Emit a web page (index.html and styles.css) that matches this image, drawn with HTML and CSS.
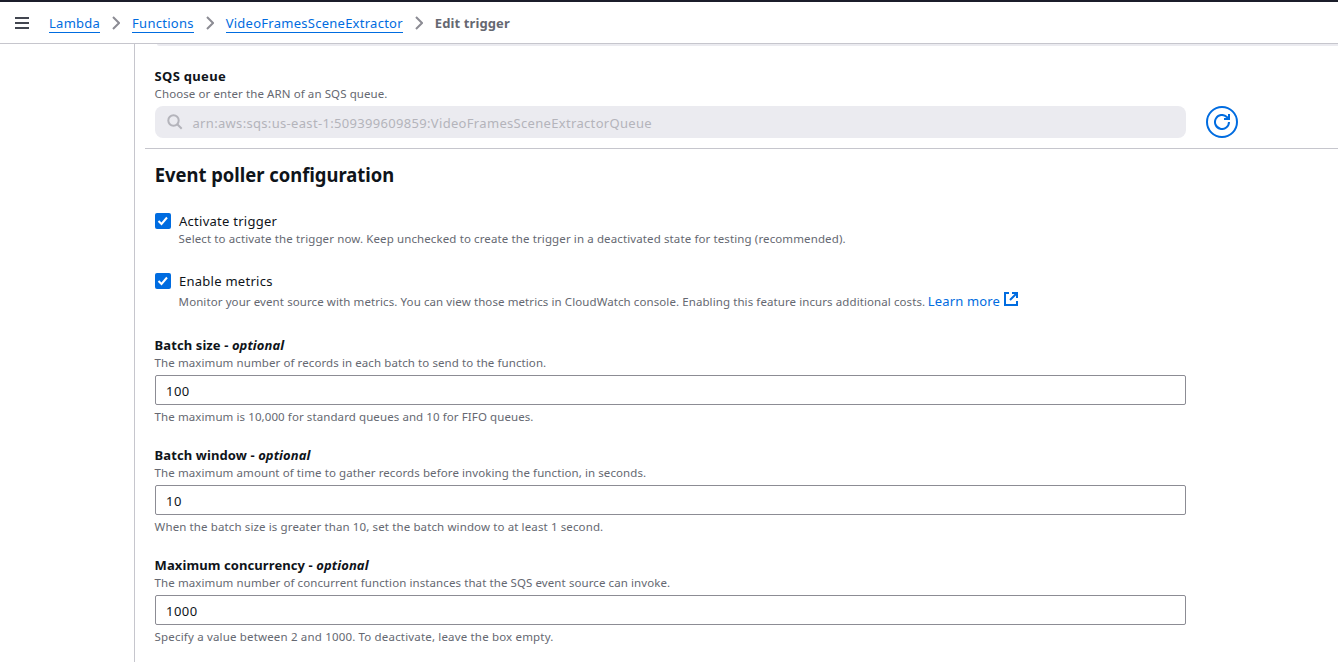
FILE: index.html
```html
<!DOCTYPE html>
<html lang="en">
<head>
<meta charset="utf-8">
<title>Edit trigger - Lambda</title>
<link rel="stylesheet" href="styles.css">
</head>
<body>
<header class="topbar">
  <svg class="menu" width="14" height="12" viewBox="0 0 14 12"><path d="M0 1h14M0 6h14M0 11h14" stroke="#424650" stroke-width="2"/></svg>
  <nav class="crumbs">
    <a href="#">Lambda</a>
    <svg class="chev" width="8" height="14" viewBox="0 0 8 14"><path d="M1 1l6 6-6 6"/></svg>
    <a href="#">Functions</a>
    <svg class="chev" width="8" height="14" viewBox="0 0 8 14"><path d="M1 1l6 6-6 6"/></svg>
    <a href="#">VideoFramesSceneExtractor</a>
    <svg class="chev" width="8" height="14" viewBox="0 0 8 14"><path d="M1 1l6 6-6 6"/></svg>
    <span class="current">Edit trigger</span>
  </nav>
</header>
<div class="page">
  <aside class="side"></aside>
  <main class="content">
    <div class="clipped"></div>
    <section class="queue">
      <div class="label queue-label">SQS queue</div>
      <div class="hint">Choose or enter the ARN of an SQS queue.</div>
      <div class="queue-row">
        <div class="search">
          <svg width="16" height="16" viewBox="0 0 16 16" fill="none" stroke="#b4b4bb" stroke-width="2"><circle cx="6.5" cy="6.5" r="5.2"/><path d="M10.3 10.3l4.4 4.4"/></svg>
          <span>arn:aws:sqs:us-east-1:509399609859:VideoFramesSceneExtractorQueue</span>
        </div>
        <button class="refresh" aria-label="Refresh"><svg width="16" height="16" viewBox="0 0 16 16" fill="none" stroke="#006ce0" stroke-width="2"><path d="M15 8a7 7 0 1 1-2.200-5.100L15 5"/><path d="M15 0v5h-5"/></svg></button>
      </div>
    </section>
    <section class="config">
      <h2><span>Event poller configuration</span></h2>
      <div class="check first">
        <svg class="box" width="16" height="16" viewBox="0 0 16 16"><rect width="16" height="16" rx="2" fill="#006ce0"/><path d="M3.500 8l3 3 5.500-6.500" fill="none" stroke="#fff" stroke-width="2"/></svg>
        <div><div class="check-label">Activate trigger</div><div class="hint activate">Select to activate the trigger now. Keep unchecked to create the trigger in a deactivated state for testing (recommended).</div></div>
      </div>
      <div class="check second">
        <svg class="box" width="16" height="16" viewBox="0 0 16 16"><rect width="16" height="16" rx="2" fill="#006ce0"/><path d="M3.500 8l3 3 5.500-6.500" fill="none" stroke="#fff" stroke-width="2"/></svg>
        <div><div class="check-label">Enable metrics</div><div class="hint metrics"><span>Monitor your event source with metrics. You can view those metrics in CloudWatch console. Enabling this feature incurs additional costs.</span><a href="#">Learn more</a><svg width="14" height="14" viewBox="0 0 14 14" fill="none" stroke="#006ce0" stroke-width="2"><path d="M5 1H1v12h12V9"/><path d="M8 1h5v5M13 1L6 8"/></svg></div></div>
      </div>
      <div class="field">
        <div class="label">Batch size - <i>optional</i></div>
        <div class="hint">The maximum number of records in each batch to send to the function.</div>
        <input value="100" aria-label="Batch size">
        <div class="hint note">The maximum is 10,000 for standard queues and 10 for FIFO queues.</div>
      </div>
      <div class="field">
        <div class="label">Batch window - <i>optional</i></div>
        <div class="hint">The maximum amount of time to gather records before invoking the function, in seconds.</div>
        <input value="10" aria-label="Batch window">
        <div class="hint note window-note">When the batch size is greater than 10, set the batch window to at least 1 second.</div>
      </div>
      <div class="field">
        <div class="label">Maximum concurrency - <i>optional</i></div>
        <div class="hint">The maximum number of concurrent function instances that the SQS event source can invoke.</div>
        <input value="1000" aria-label="Maximum concurrency">
        <div class="hint note concurrency-note">Specify a value between 2 and 1000. To deactivate, leave the box empty.</div>
      </div>
    </section>
  </main>
</div>
</body>
</html>
```
FILE: styles.css
```css
* { box-sizing: border-box; }
body { margin: 0; height: 662px; overflow: hidden; background: #fff; color: #0f141a; font: 13px/20px "Noto Sans", sans-serif; white-space: nowrap; }
a { color: #006ce0; text-decoration: none; }
svg { flex: none; }
.topbar { height: 44px; border-top: 2px solid #1b1d2a; border-bottom: 1px solid #c6c6cd; display: flex; align-items: center; padding-left: 15px; }
.crumbs { display: flex; align-items: center; margin-left: 20px; letter-spacing: .26px; }
.crumbs a { height: 20px; border-bottom: 1px solid #006ce0; line-height: 20px; }
.chev { margin: 0 12px; fill: none; stroke: #8c8c94; stroke-width: 2; }
.current { color: #656871; font-weight: 700; letter-spacing: .1px; }
.page { display: flex; height: 618px; }
.side { width: 135px; border-right: 1px solid #c6c6cd; }
.content { flex: 1; padding-left: 10px; }
.clipped { height: 2px; margin-left: 12px; background: #ebebf0; border-radius: 0 0 0 8px; }
.queue { height: 103px; padding: 21px 0 0 10px; border-bottom: 1px solid #c6c6cd; }
.label { font-weight: 700; line-height: 18px; height: 19px; letter-spacing: .09px; }
.queue-label { letter-spacing: .3px; }
.label, .hint, h2 span { text-indent: -.4px; }
.hint { color: #656871; font-size: 11.5px; line-height: 16px; height: 16px; letter-spacing: .09px; }
.activate { letter-spacing: .115px; }
.queue-row { display: flex; gap: 20px; margin-top: 4px; }
.search { width: 1031px; height: 32px; border-radius: 8px; background: #ebebf0; color: #b4b4bb; display: flex; align-items: center; gap: 9.5px; padding: 2px 0 0 12px; letter-spacing: .32px; }
.search svg { margin-top: -2px; }
.refresh { width: 32px; height: 32px; border: 2px solid #006ce0; border-radius: 50%; background: #fff; padding: 0; display: flex; align-items: center; justify-content: center; }
.config { padding-left: 10px; }
h2 { margin: 0; padding-top: 14px; height: 62px; font-size: 20px; line-height: 24px; }
h2 span { display: inline-block; transform: scaleX(.92); transform-origin: left; }
.check { display: flex; gap: 8px; height: 60px; }
.check.second { height: 65px; }
.box { margin-top: 2px; }
.check-label { line-height: 20px; letter-spacing: .26px; }
.metrics { display: flex; align-items: flex-start; line-height: 20px; height: 20px; margin-top: 1px; }
.metrics a { font-size: 13px; line-height: 19px; margin-left: 3px; letter-spacing: .14px; }
.metrics svg { margin-left: 4px; }
.field { height: 110px; }
.field input { display: block; width: 1031px; height: 30px; margin-top: 4px; border: 1px solid #8c8c94; border-radius: 2px; padding: 2px 10px 0; color: #0f141a; font: 13px "Noto Sans", sans-serif; letter-spacing: .45px; }
.note { margin-top: 4px; }
.window-note { letter-spacing: .12px; }
.concurrency-note { letter-spacing: .17px; }
```
